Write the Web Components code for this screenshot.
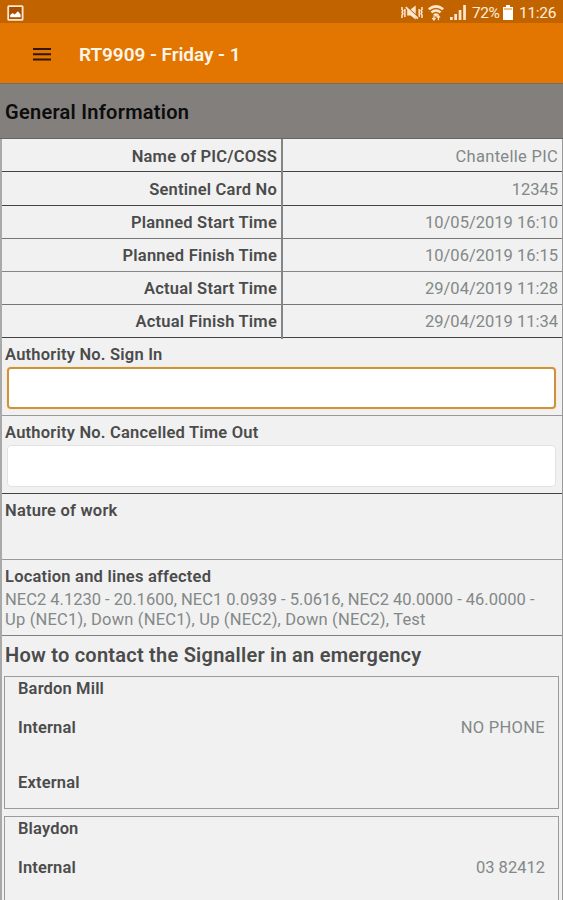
<!DOCTYPE html>
<html lang="en">
<head>
<meta charset="utf-8">
<title>RT9909</title>
<style>
  html, body {
    margin: 0;
    height: 900px;
    overflow: hidden;
    background: #f1f1f1;
    color: #4b4b4b;
    font: 16.5px/20px Roboto, sans-serif;
  }
</style>
</head>
<body>
<rt-app></rt-app>

<script>
function define(name, html) {
  const template = document.createElement('template');
  template.innerHTML = html;

  window.customElements.define(name, class extends HTMLElement {
    constructor() {
      super();
      this.attachShadow({ mode: 'open' });
      this.shadowRoot.appendChild(template.content.cloneNode(true));
    }
  });
}

define('status-bar', `
  <style>
    :host {
      display: flex;
      align-items: center;
      box-sizing: border-box;
      height: 23px;
      padding: 2px 8px 0 7px;
      background: #c16400;
      color: #ffeedd;
      font-size: 15.5px;
      line-height: 20px;
    }
    svg { display: block; flex: none; }
    .picture { margin-right: auto; }
    .wifi { margin-left: 5px; }
    .signal { margin-left: 6px; }
    .percent { width: 27px; margin-left: 6px; letter-spacing: -.4px; }
    .battery { margin-left: 4px; }
    .time { width: 36px; margin-left: 6px; letter-spacing: -.3px; }
  </style>
  <svg class="picture" width="17" height="16" viewBox="0 0 17 16">
    <rect x="1.2" y="1.2" width="14.4" height="13.6" rx=".6" fill="#a94e00" stroke="#ffe6cf" stroke-width="1.8"/>
    <path d="M3.2 12.3V10l2.6-2 1.8 1.6 3.3-3.4 2.7 3.3v2.8z" fill="#fff"/>
  </svg>
  <svg width="22" height="15" viewBox="0 0 22 15" fill="none" stroke="#ffe6cf" stroke-width="1.5">
    <path d="M1 2v2.4l1 1.3-1 1.5 1 1.5-1 1.4V13M3.9 4v8M21 2v2.4l-1 1.3 1 1.5-1 1.5 1 1.4V13M18.2 4v8"/>
    <path d="M6.2 4.6h3.3l5.2-4v13.8l-5.2-4H6.2z" fill="#ffe6cf" stroke="none"/>
    <path d="M6 2l11.5 10.5" stroke="#b65c0a" stroke-width="1.4"/>
    <path d="M4.8 2.2l12.1 11.3" stroke-width="1.8"/>
  </svg>
  <svg class="wifi" width="16" height="16" viewBox="0 0 16 16" fill="none" stroke="#ffe6cf" stroke-width="2.5">
    <path d="M.8 4.2Q8-1.4 15.2 4.2M3.4 7.4Q8 3.7 12.6 7.4"/>
    <path d="M5.2 9.5Q8 7.2 10.8 9.5L8 12z" fill="#ffe6cf" stroke="none"/>
    <path d="M6 10.5v4.5M4.3 13L6 15l1.6-2M10.4 15.2v-4.4M8.8 12.6l1.6-2 1.7 2" stroke-width="1.2"/>
  </svg>
  <svg class="signal" width="16" height="15" viewBox="0 0 16 15" fill="#ffe6cf">
    <path d="M0 12h2.7v3H0zM4.3 9H7v6H4.3zM8.7 5h2.7v10H8.7zM13.2 0h2.7v15h-2.7z"/>
  </svg>
  <span class="percent">72%</span>
  <svg class="battery" width="10" height="15" viewBox="0 0 10 15">
    <path d="M3 0h4v2h3v13H0V2h3z" fill="#fff"/>
    <path d="M1 3h8v2H1z" fill="#eebd8d"/>
  </svg>
  <span class="time">11:26</span>
`);

define('title-bar', `
  <style>
    :host {
      display: flex;
      align-items: center;
      box-sizing: border-box;
      height: 60px;
      padding: 3px 0 0 33px;
      background: #e27600;
      color: #fff5e9;
      font-size: 19px;
      font-weight: 600;
      letter-spacing: -.05px;
    }
    svg { display: block; margin-right: 28px; }
  </style>
  <svg width="18" height="13" viewBox="0 0 18 13" fill="#321600">
    <path d="M0 0h18v2H0zM0 5.3h18v2H0zM0 10.6h18v2H0z"/>
  </svg>
  <slot></slot>
`);

define('section-header', `
  <style>
    :host {
      display: flex;
      align-items: center;
      box-sizing: border-box;
      height: 56px;
      padding: 2px 5px 0;
      border-top: 1px solid #746d67;
      border-bottom: 1px solid #686464;
      background: #837f7d;
      color: #0d0c0c;
      font-size: 20px;
      font-weight: 600;
      letter-spacing: .27px;
    }
  </style>
  <slot></slot>
`);

define('info-row', `
  <style>
    :host {
      display: grid;
      grid-template-columns: 281px 1fr;
      box-sizing: border-box;
      height: 33px;
      border-bottom: 1px solid var(--line, #444);
      text-align: right;
      line-height: 34px;
    }
    .label {
      height: 100%;
      box-sizing: border-box;
      padding-right: 4px;
      border-right: 2px solid #858585;
      font-weight: 600;
      letter-spacing: .22px;
    }
    .value { padding-right: 4px; color: #838888; }
  </style>
  <div class="label"><slot name="label"></slot></div>
  <div class="value"><slot></slot></div>
`);

define('form-block', `
  <style>
    :host {
      display: block;
      box-sizing: border-box;
      padding: 7px 5px 0 3px;
      border-bottom: 1px solid var(--line, #444);
      color: #838888;
    }
    .label { color: #4b4b4b; font-weight: 600; letter-spacing: .21px; }
  </style>
  <div class="label"><slot name="label"></slot></div>
  <slot></slot>
`);

define('text-field', `
  <style>
    :host { display: block; margin: 2px 1px 0 2px; }
    input {
      display: block;
      box-sizing: border-box;
      width: 100%;
      height: 42px;
      padding: 0 8px;
      border: 1px solid #e2e2e2;
      border-radius: 4px;
      outline: none;
      background: #fff;
      font: inherit;
    }
    :host([active]) input {
      border: 2px solid #cb9340;
      box-shadow: 0 0 1px 1px #faead0;
    }
  </style>
  <input type="text">
`);

define('contact-card', `
  <style>
    :host {
      display: block;
      box-sizing: border-box;
      height: 133px;
      margin: 0 3px 7px 2px;
      padding: 2px 13px 0;
      border: 1px solid #9b9b9b;
      font-weight: 600;
      letter-spacing: .15px;
    }
    .line { display: flex; justify-content: space-between; margin-top: 19px; }
    .external { margin-top: 35px; }
    .value { color: #838888; font-weight: 400; }
  </style>
  <slot name="name"></slot>
  <div class="line"><span>Internal</span><span class="value"><slot name="internal"></slot></span></div>
  <div class="line external"><slot name="external"></slot></div>
`);

define('rt-app', `
  <style>
    :host { display: block; height: 900px; overflow: hidden; }
    main { border-left: 2px solid #a9a9a9; border-right: 1px solid #999; }
    h2 {
      margin: 0;
      padding: 8px 3px 9px;
      font-size: 20px;
      font-weight: 600;
      line-height: 23px;
      letter-spacing: .24px;
    }
    .location { margin-top: 3px; white-space: nowrap; }
    .lines { letter-spacing: .19px; }
    .wide { letter-spacing: .3px; }
  </style>
  <status-bar></status-bar>
  <title-bar><span>RT9909 - Friday - 1</span></title-bar>
  <section-header><span>General Information</span></section-header>
  <main>
    <info-row style="line-height: 36px"><span slot="label">Name of PIC/COSS</span><span class="wide">Chantelle PIC</span></info-row>
    <info-row style="height: 34px; line-height: 36px"><span slot="label">Sentinel Card No</span>12345</info-row>
    <info-row style="--line: #777"><span slot="label">Planned Start Time</span>10/05/2019 16:10</info-row>
    <info-row style="--line: #858585"><span slot="label">Planned Finish Time</span>10/06/2019 16:15</info-row>
    <info-row style="--line: #777"><span slot="label">Actual Start Time</span>29/04/2019 11:28</info-row>
    <info-row><span slot="label">Actual Finish Time</span>29/04/2019 11:34</info-row>
    <form-block style="height: 78px; --line: #999">
      <span slot="label">Authority No. Sign In</span>
      <text-field active></text-field>
    </form-block>
    <form-block style="height: 78px">
      <span slot="label">Authority No. Cancelled Time Out</span>
      <text-field></text-field>
    </form-block>
    <form-block style="height: 66px; --line: #999"><span slot="label">Nature of work</span></form-block>
    <form-block style="height: 76px; --line: #808080">
      <span slot="label">Location and lines affected</span>
      <div class="location">NEC2 4.1230 - 20.1600, NEC1 0.0939 - 5.0616, NEC2 40.0000 - 46.0000 -<br><span class="lines">Up (NEC1), Down (NEC1), Up (NEC2), Down (NEC2), Test</span></div>
    </form-block>
    <h2>How to contact the Signaller in an emergency</h2>
    <contact-card>
      <span slot="name">Bardon Mill</span>
      <span slot="internal" class="wide">NO PHONE</span>
      <span slot="external">External</span>
    </contact-card>
    <contact-card>
      <span slot="name">Blaydon</span>
      <span slot="internal" style="letter-spacing: 0">03 82412</span>
    </contact-card>
  </main>
`);
</script>
</body>
</html>
